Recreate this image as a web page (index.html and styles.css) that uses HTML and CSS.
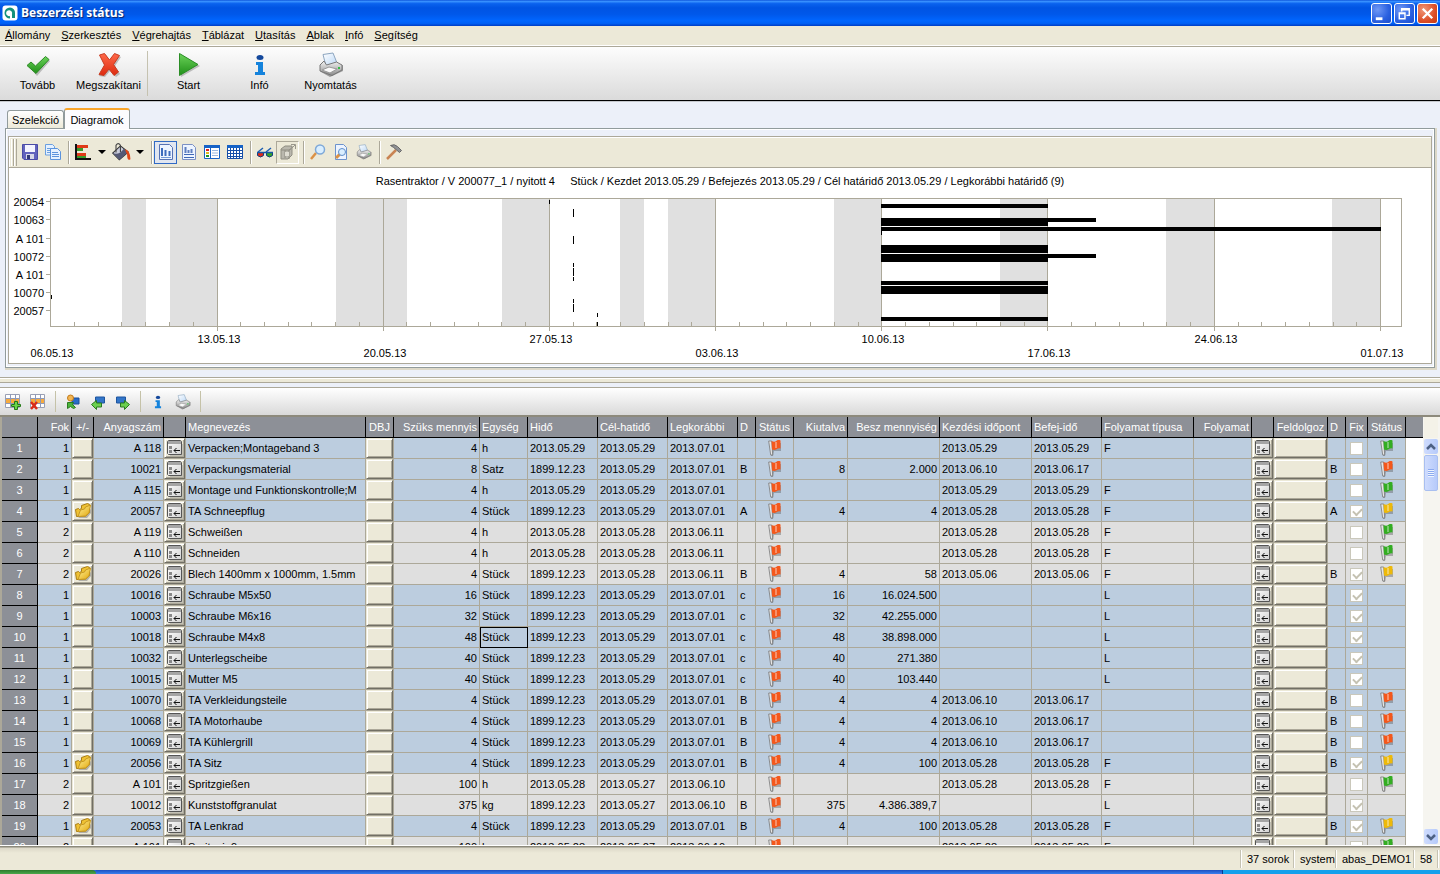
FILE: index.html
```html
<!DOCTYPE html>
<html lang="hu">
<head>
<meta charset="utf-8">
<title>Beszerzési státus</title>
<link rel="stylesheet" href="styles.css">
</head>
<body>
<svg class="sprite" aria-hidden="true">
  <defs>
    <linearGradient id="gGreen" x1="0" y1="0" x2="0" y2="1"><stop offset="0" stop-color="#6cd35a"/><stop offset="1" stop-color="#1f8f18"/></linearGradient>
    <linearGradient id="gRed" x1="0" y1="0" x2="0" y2="1"><stop offset="0" stop-color="#ff6a4a"/><stop offset="1" stop-color="#dd2a10"/></linearGradient>
    <linearGradient id="gGold" x1="0" y1="0" x2="1" y2="1"><stop offset="0" stop-color="#fff29a"/><stop offset="1" stop-color="#e2a70c"/></linearGradient>
    <linearGradient id="gGray" x1="0" y1="0" x2="0" y2="1"><stop offset="0" stop-color="#f4f4f4"/><stop offset="1" stop-color="#8b8b8b"/></linearGradient>
    <linearGradient id="gPaper" x1="0" y1="0" x2="1" y2="1"><stop offset="0" stop-color="#ffffff"/><stop offset="1" stop-color="#b9d6f5"/></linearGradient>
    <linearGradient id="gWindow" x1="0" y1="0" x2="1" y2="1"><stop offset="0" stop-color="#ffffff"/><stop offset="1" stop-color="#d2d2d2"/></linearGradient>
  </defs>
  <symbol id="i-check" viewBox="0 0 26 26"><path d="M4 15l3-4 4 4L22 6l3 3-13 15z" fill="#888" opacity=".5"/><path d="M2 13.500l4-3.500 4.500 4L20.500 4.500l3.500 3-13 14z" fill="url(#gGreen)" stroke="#2c8a24"/></symbol>
  <symbol id="i-cross" viewBox="0 0 26 26"><path d="M5 4l5-1 4 7 6-7 5 2-6 9 5 8-4 3-6-6-5 6-6-1 6-10z" fill="#888" opacity=".5"/><path d="M3.500 3l5-1.500 5 6.500 5-6.500 5 2-6 9 5 7.500-4.500 3.500-5-6.500-5 6.500-5-1 5.500-9.500z" fill="url(#gRed)" stroke="#c93c22"/></symbol>
  <symbol id="i-play" viewBox="0 0 26 26"><path d="M5 3l19 11L5 25z" fill="#888" opacity=".5"/><path d="M3.500 1.500L22 12.500l-18.500 11z" fill="url(#gGreen)" stroke="#2a8d25"/></symbol>
  <symbol id="i-info" viewBox="0 0 26 26"><ellipse cx="13" cy="5.500" rx="3.500" ry="2.500" fill="#14489c"/><path d="M9 10h7v10h2v3H8v-3h3v-7H9z" fill="#1583dc"/></symbol>
  <symbol id="i-printer" viewBox="0 0 26 26"><path d="M3 20l9 5 13-6v-6z" fill="#666" opacity=".6"/><path d="M5 2.500L15 1l4 10-11 3z" fill="url(#gPaper)" stroke="#8da6c0"/><path d="M2 13l4-4 2.500 4 10-3 5.500 3v5l-10 5.500L2 19z" fill="url(#gGray)" stroke="#777"/><path d="M4 18l7-3 8 2-7 4z" fill="#fafafa" stroke="#999"/><path d="M20 16h2" stroke="#3b4" stroke-width="2"/></symbol>
  <symbol id="i-save" viewBox="0 0 16 16"><path d="M.5.500h15v15H2l-1.500-1.500z" fill="#6263bd" stroke="#4a4ba6"/><path d="M3 1h10v7H3z" fill="#f4f4ff"/><path d="M4 10h8v5H4z" fill="#d8d8e8"/><path d="M5 11h3v4H5z" fill="#333a77"/></symbol>
  <symbol id="i-copy" viewBox="0 0 16 16"><path d="M.5.500h7l2 2V11h-9z" fill="#e5f1ff" stroke="#6a9fe0"/><path d="M2 4.500h5M2 6.500h5M2 8.500h5" stroke="#6a9fe0"/><path d="M5.500 4.500h7l3 3v8h-10z" fill="#e5f1ff" stroke="#5b93dd"/><path d="M7 8.500h6M7 10.500h7M7 12.500h7" stroke="#5b93dd"/></symbol>
  <symbol id="i-bars" viewBox="0 0 16 16"><path d="M2 1h11v3H2zM2 9h9v3H2z" fill="#e03a18"/><path d="M2 4h6v3H2zM2 12h9v2H2z" fill="#389b2a"/><path d="M1 0v15h15" stroke="#111" stroke-width="2" fill="none"/></symbol>
  <symbol id="i-bucket" viewBox="0 0 18 16"><path d="M1.500 9L8.500 2.500l7 5.500-8 7z" fill="#c9ccdc" stroke="#333"/><path d="M4.500 8.500V2q2-3 4 0v6" fill="none" stroke="#444"/><path d="M1.500 9q6 2 10-4l4 3-8 7z" fill="#555975"/><path d="M12.500 5.500q5 1 5 9-3 2-3-4z" fill="#e14718"/></symbol>
  <symbol id="i-chart1" viewBox="0 0 16 16"><path d="M1.500 .5h10l3 3v12h-13z" fill="#edf4ff" stroke="#5672b4"/><path d="M4 4v8M7.500 6v6M11.500 7v5" stroke="#3d6bbd" stroke-width="2"/><path d="M3 13.500h10" stroke="#749ad8"/></symbol>
  <symbol id="i-chart2" viewBox="0 0 16 16"><path d="M1.500 .5h10l3 3v12h-13z" fill="#edf4ff" stroke="#7b90c4"/><path d="M4.500 3v6M7.500 6v3M10.500 5v4" stroke="#5f7fc0" stroke-width="2"/><path d="M3 10.500h10M3 13.500h10" stroke="#3f67b5" stroke-width="1"/></symbol>
  <symbol id="i-legend" viewBox="0 0 16 16"><path d="M.5 1.500h15v13H.5z" fill="#fff" stroke="#1763c6"/><path d="M0 1h16v3H0z" fill="#1763c6"/><path d="M6.500 4v10" stroke="#1763c6"/><path d="M2 5h3v2H2z" fill="#d22"/><path d="M2 8h3v2H2z" fill="#db2"/><path d="M2 11h3v2H2z" fill="#292"/><path d="M8 6.500h6M8 9h6M8 11.500h6" stroke="#99b8df"/></symbol>
  <symbol id="i-table" viewBox="0 0 16 16"><path d="M.5 1.500h15v13H.5z" fill="#fff" stroke="#164fa8"/><path d="M0 1h16v3H0z" fill="#1763c6"/><path d="M3.500 4v10M6.500 4v10M9.500 4v10M12.500 4v10M1 6.500h14M1 9.500h14M1 12.500h14" stroke="#164fa8"/></symbol>
  <symbol id="i-glasses" viewBox="0 0 16 16"><path d="M1 8l5-4M9 8l5-4" stroke="#1f5fb0" stroke-width="1.500"/><path d="M.5 8.500h6v3q-3 3-6 0z" fill="#e02a18" stroke="#123f80"/><path d="M9.500 8.500h6v3q-3 3-6 0z" fill="#36a328" stroke="#123f80"/><path d="M0 8.500h16" stroke="#1758a5" stroke-width="1.500"/></symbol>
  <symbol id="i-cube" viewBox="0 0 16 16"><path d="M1 5l4-3h7v9l-4 4H1z" fill="#b9b7ad" stroke="#8f8d82"/><path d="M1 6h8v9M9 6l4-3M5 6v8" stroke="#8f8d82" fill="none"/><path d="M5 8h4v4H5z" fill="#dedcd2"/><path d="M9 7l6-6M11 .5h4.500V5" stroke="#99978c" fill="none"/></symbol>
  <symbol id="i-lens" viewBox="0 0 16 16"><path d="M1 15l5-6" stroke="#db9145" stroke-width="2.500"/><circle cx="10" cy="5.500" r="4.500" fill="#d9eeff" stroke="#7fa9d8" stroke-width="1.500"/></symbol>
  <symbol id="i-preview" viewBox="0 0 16 16"><path d="M2.500.500h8l3 3v12h-11z" fill="#edf4ff" stroke="#6c93cd"/><path d="M3 14l4-4" stroke="#db9145" stroke-width="3"/><circle cx="9" cy="8" r="3.500" fill="#d9eeff" stroke="#5d8ecb"/></symbol>
  <symbol id="i-hammer" viewBox="0 0 16 16"><path d="M1 15L10 6" stroke="#c98453" stroke-width="2.500"/><path d="M4.500 1.500q4-2 7 1l4 4-2 2-3.500-3q-2-2-5.500-4z" fill="#8f9194" stroke="#666"/></symbol>
  <symbol id="i-rowadd" viewBox="0 0 16 16"><path d="M.5.500h14v13H.5z" fill="#fff" stroke="#9aa0b4"/><path d="M1 5h13v4H1z" fill="#f7ab3e"/><path d="M5.500 0v13M10.500 0v13M1 4.500h13M1 9.500h13" stroke="#8f9ab8"/><path d="M9.500 7.500h3v3h3v2h-3v3h-3v-3h-3v-2h3z" fill="#6ad648" stroke="#257817"/></symbol>
  <symbol id="i-rowdel" viewBox="0 0 16 16"><path d="M.5.500h14v13H.5z" fill="#fff" stroke="#9aa0b4"/><path d="M1 5h13v4H1z" fill="#f7ab3e"/><path d="M5.500 0v13M10.500 0v13M1 4.500h13M1 9.500h13" stroke="#8f9ab8"/><path d="M1 8l6 7M7 8l-6 7" stroke="#da2c18" stroke-width="2.500"/></symbol>
  <symbol id="i-swap" viewBox="0 0 16 16"><path d="M7 4h7v6H7z" fill="#2a6cc8" stroke="#1d4f9b"/><circle cx="5.500" cy="4" r="3" fill="#f3b653" stroke="#c27b1c"/><path d="M2.500 8.500h6l-1 2 3 3-2 1-3-2-3 2z" fill="#4bb53b" stroke="#2a7b20"/></symbol>
  <symbol id="i-left" viewBox="0 0 16 16"><path d="M5.500 3h9v6h-9z" fill="#3275c8" stroke="#1d559f"/><path d="M1.500 10.500l5-4v2.500h5v4h-5v2.500z" fill="#6cd04f" stroke="#297b20"/></symbol>
  <symbol id="i-right" viewBox="0 0 16 16"><path d="M1.500 3h9v6h-9z" fill="#3275c8" stroke="#1d559f"/><path d="M14.500 10.500l-5-4v2.500h-4v4h4v2.500z" fill="#6cd04f" stroke="#297b20"/></symbol>
  <symbol id="i-folder" viewBox="0 0 16 16"><path d="M3 15h9l4-5V6z" fill="#777" opacity=".5"/><path d="M1.500 13.500L.5 6.500l3-1 1 1 2-1V2.500l6-2 2 1v8l-4 3.500z" fill="#efc233" stroke="#a87c14"/><path d="M3 13.500L5.500 7l4-1 1-2 5-2-1.500 8-3.500 3z" fill="url(#gGold)" stroke="#c69822"/></symbol>
  <symbol id="i-form" viewBox="0 0 16 16"><path d="M3 4h13v12H3z" fill="#777" opacity=".35"/><path d="M.5 13.500v-12l1-1h12l1 1v13H1.500z" fill="url(#gWindow)" stroke="#555"/><path d="M1 1h13v3H1z" fill="#a5a5a5"/><path d="M2 6h3v3H2zM2 10h3v3H2z" fill="#888"/><path d="M7 10.500h6M9.500 8L7 10.500 9.500 13" fill="none" stroke="#111"/></symbol>
  <symbol id="i-flag" viewBox="0 0 14 16"><path d="M5 3h8v8H6l-1 5H3z" fill="#555" opacity=".4"/><path d="M.7 1h3l1 14h-2z" fill="#e6e6e6" stroke="#777" stroke-width=".8"/><path d="M3.500 1q3 1.500 5-.2t4-.3v8q-2-.5-4 .7t-4.500.3z" fill="currentColor"/><path d="M8 2v6" stroke="#fff" opacity=".35" fill="none" stroke-width="2"/></symbol>
</svg>

<div class="app">
  <header class="titlebar">
    <svg class="logo" viewBox="0 0 16 16" aria-hidden="true"><rect x=".5" y=".5" width="15" height="15" rx="3" fill="#fff"/><path d="M8 2.500a5.500 5.500 0 1 0 0 11L8 11a3 3 0 1 1 2-2v4h3V8a5 5 0 0 0-5-5.500z" fill="#13917c"/></svg>
    <h1>Beszerzési státus</h1>
    <div class="winbtns">
      <button class="win" aria-label="Kis méret"><svg viewBox="0 0 20 20"><path d="M4 14h7v3H4z" fill="#fff"/></svg></button>
      <button class="win" aria-label="Előző méret"><svg viewBox="0 0 20 20"><path d="M7 8V5h8v7h-3M7 6h8M4.500 9.500h6v6h-6zM4 10h7" fill="none" stroke="#fff" stroke-width="1.500"/></svg></button>
      <button class="win close" aria-label="Bezárás"><svg viewBox="0 0 20 20"><path d="M5 5l10 10M15 5L5 15" stroke="#fff" stroke-width="2.400"/></svg></button>
    </div>
  </header>

  <nav class="menu">
    <a href="#"><u>Á</u>llomány</a><a href="#"><u>S</u>zerkesztés</a><a href="#"><u>V</u>égrehajtás</a><a href="#"><u>T</u>áblázat</a><a href="#"><u>U</u>tasítás</a><a href="#"><u>A</u>blak</a><a href="#"><u>I</u>nfó</a><a href="#"><u>S</u>egítség</a>
  </nav>

  <div class="maintools">
    <button><svg><use href="#i-check"/></svg>Tovább</button>
    <button><svg><use href="#i-cross"/></svg>Megszakítani</button>
    <i class="sep"></i>
    <button><svg><use href="#i-play"/></svg>Start</button>
    <button><svg><use href="#i-info"/></svg>Infó</button>
    <button><svg><use href="#i-printer"/></svg>Nyomtatás</button>
  </div>

  <section class="upper">
    <div class="tabs" role="tablist">
      <button class="tab" role="tab">Szelekció</button>
      <button class="tab active" role="tab" aria-selected="true">Diagramok</button>
    </div>
    <div class="tabpage">
      <div class="frame">
        <div class="charttools">
          <i class="grip"></i><i class="grip"></i>
          <button aria-label="Mentés"><svg><use href="#i-save"/></svg></button>
          <button aria-label="Másolás"><svg><use href="#i-copy"/></svg></button>
          <i class="sep"></i>
          <button aria-label="Diagramtípus"><svg><use href="#i-bars"/></svg></button>
          <button class="arrow" aria-label="Diagramtípusok"></button>
          <button aria-label="Kitöltés"><svg class="wide"><use href="#i-bucket"/></svg></button>
          <button class="arrow" aria-label="Színek"></button>
          <i class="sep"></i>
          <button class="on" aria-label="Függőleges rács"><svg><use href="#i-chart1"/></svg></button>
          <button aria-label="Vízszintes rács"><svg><use href="#i-chart2"/></svg></button>
          <button aria-label="Jelmagyarázat"><svg><use href="#i-legend"/></svg></button>
          <button aria-label="Adattábla"><svg><use href="#i-table"/></svg></button>
          <i class="sep"></i>
          <button aria-label="3D"><svg><use href="#i-glasses"/></svg></button>
          <button class="inset" aria-label="Forgatás"><svg><use href="#i-cube"/></svg></button>
          <i class="sep"></i>
          <button aria-label="Nagyítás"><svg><use href="#i-lens"/></svg></button>
          <button aria-label="Nyomtatási kép"><svg><use href="#i-preview"/></svg></button>
          <button aria-label="Diagram nyomtatása"><svg><use href="#i-printer"/></svg></button>
          <i class="sep"></i>
          <button aria-label="Beállítások"><svg><use href="#i-hammer"/></svg></button>
        </div>
        <svg class="chart" id="chart" viewBox="9 168 1422 195" role="img" aria-label="Gantt-diagram"></svg>
      </div>
    </div>
  </section>

  <div class="splitter"></div>

  <div class="gridtools">
    <button aria-label="Sor beszúrása"><svg><use href="#i-rowadd"/></svg></button>
    <button aria-label="Sor törlése"><svg><use href="#i-rowdel"/></svg></button>
    <i class="sep"></i>
    <button aria-label="Csere"><svg><use href="#i-swap"/></svg></button>
    <button aria-label="Előző"><svg><use href="#i-left"/></svg></button>
    <button aria-label="Következő"><svg><use href="#i-right"/></svg></button>
    <i class="sep"></i>
    <button aria-label="Sor infó"><svg><use href="#i-info"/></svg></button>
    <button aria-label="Táblázat nyomtatása"><svg><use href="#i-printer"/></svg></button>
    <i class="sep"></i>
  </div>

  <main class="gridarea">
    <div class="gridbody">
      <table class="grid">
        <colgroup>
          <col class="c36"><col class="c34"><col class="c22"><col class="c70"><col class="c22"><col class="c180"><col class="c28"><col class="c86"><col class="c48"><col class="c70"><col class="c70"><col class="c70"><col class="c18"><col class="c38"><col class="c54"><col class="c92"><col class="c92"><col class="c70"><col class="c92"><col class="c58"><col class="c22"><col class="c54"><col class="c18"><col class="c22"><col class="c38"><col class="c17">
        </colgroup>
        <thead><tr>
          <th></th><th class="r">Fok</th><th class="c">+/-</th><th class="r">Anyagszám</th><th></th><th>Megnevezés</th><th class="c">DBJ</th><th class="r">Szüks mennyis</th><th>Egység</th><th>Hidő</th><th>Cél-hatidő</th><th>Legkorábbi</th><th>D</th><th class="c">Státus</th><th class="r">Kiutalva</th><th class="r">Besz mennyiség</th><th>Kezdési időpont</th><th>Befej-idő</th><th>Folyamat típusa</th><th class="r">Folyamat</th><th></th><th class="c">Feldolgoz</th><th>D</th><th class="c">Fix</th><th class="c">Státus</th><th class="last"></th>
        </tr></thead>
        <tbody id="rows"></tbody>
      </table>
    </div>
    <div class="scroll">
      <i class="corner"></i>
      <button class="sb" aria-label="Fel"><svg viewBox="0 0 10 10"><path d="M1 7l4-4 4 4" fill="none" stroke="#4d6185" stroke-width="2.500"/></svg></button>
      <i class="thumb"></i>
      <i class="track"></i>
      <button class="sb" aria-label="Le"><svg viewBox="0 0 10 10"><path d="M1 3l4 4 4-4" fill="none" stroke="#4d6185" stroke-width="2.500"/></svg></button>
    </div>
  </main>

  <footer class="status">
    <span class="s52">37 sorok</span><span class="s42">system</span><span class="s78">abas_DEMO1</span><span class="s24">58</span><span class="s2"></span>
  </footer>
  <div class="taskbar"><i class="start"></i><i class="mid"></i><i class="tray"></i></div>
</div>
<script src="app.js"></script>
</body>
</html>
```

FILE: styles.css
```css
* { box-sizing: border-box; }
body { margin: 0; font: 11px/14px "Liberation Sans", Arial, sans-serif; color: #000; }
button { font: inherit; color: inherit; border: 0; padding: 0; margin: 0; background: none; }
.sprite { position: absolute; width: 0; height: 0; }
.app { display: flex; flex-direction: column; height: 100vh; background: #ecf0f9; overflow: hidden; }

.titlebar { display: flex; align-items: center; gap: 3px; flex: 0 0 26px; padding: 0 2px 0 2px; background: linear-gradient(#0a50d8 0, #3a93ff 5%, #0a62ee 14%, #0054e3 30%, #0058ea 55%, #0066ff 80%, #0060f5 90%, #003dc4 100%); }
.titlebar h1 { flex: 1; margin: 0; font: bold 12px/16px "Open Sans", "Liberation Sans", sans-serif; color: #fff; text-shadow: 1px 1px 1px #0a246a; }
.logo { width: 16px; height: 16px; }
.winbtns { display: flex; gap: 2px; }
.win { width: 21px; height: 21px; border: 1px solid #fff; border-radius: 3px; background: radial-gradient(circle at 30% 30%, #6f98f5, #2a60e0 60%, #1c4dcb); }
.win svg { display: block; width: 19px; height: 19px; }
.win.close { background: radial-gradient(circle at 30% 30%, #f09878, #dd4f28 60%, #c63a12); }

.menu { display: flex; gap: 11px; flex: 0 0 21px; padding: 2px 5px 0; background: #ece9d8; border-bottom: 1px solid #aca899; box-shadow: inset 0 -1px #fff; }
.menu a { color: #000; text-decoration: none; }

.maintools { display: flex; flex: 0 0 55px; padding: 4px 2px 0; background: linear-gradient(#fdfdfd, #dadada); border-bottom: 1px solid #c5c8cd; box-shadow: inset 0 -1px #000; }
.maintools button { display: flex; flex-direction: column; align-items: center; width: 71px; height: 46px; white-space: nowrap; }
.maintools svg { width: 26px; height: 26px; margin-top: 1px; }
.maintools .sep { width: 1px; height: 45px; margin: 0 5px 0 3px; background: #c5c2b0; }

.upper { padding: 6px 5px 9px 5px; }
.tabs { display: flex; align-items: flex-end; height: 20px; padding-left: 2px; }
.tab { height: 18px; width: 57px; border: 1px solid #919b9c; border-bottom: 0; border-radius: 3px 3px 0 0; background: linear-gradient(#fff, #ece9d8); }
.tab.active { height: 21px; width: 66px; margin-bottom: -1px; border-top: 2px solid #f9a52b; background: #fcfcfe; z-index: 1; }
.tabpage { padding: 7px 2px 3px; border: 1px solid #919b9c; box-shadow: inset 0 0 0 1px #fff, 1px 1px 0 1px #dcd8c8; }
.frame { border: 1px solid #aca899; background: #fff; }
.charttools { display: flex; align-items: center; height: 31px; padding-left: 2px; background: #ece9d8; border-bottom: 1px solid #aca899; box-shadow: inset 1px 1px #fff; }
.charttools button { display: flex; align-items: center; justify-content: center; width: 23px; height: 23px; }
.charttools svg { width: 16px; height: 16px; }
.charttools .wide { width: 20px; height: 18px; }
.charttools .sep { width: 2px; height: 23px; margin: 0 1px 0 4px; background: #aca899; border-right: 1px solid #fff; }
.charttools .grip { width: 3px; height: 27px; border-left: 1px solid #fff; border-right: 1px solid #aca899; }
.charttools .grip + .grip { margin-right: 1px; }
.charttools .arrow { width: 15px; }
.charttools .arrow::before { content: ""; border: 4px solid transparent; border-top-color: #000; border-bottom: 0; }
.charttools .on { border: 1px solid #316ac5; background: #e1e6f0; }
.charttools .inset { border: 1px solid #fff; border-top-color: #aca899; border-left-color: #aca899; }
.chart { display: block; width: 100%; height: auto; font-size: 11px; }
.chart text { white-space: pre; }
.axis { stroke: #aca899; fill: none; shape-rendering: crispEdges; }
.band { fill: #e0e0e0; }
.bar { shape-rendering: crispEdges; }

.splitter { flex: 0 0 10px; border-top: 1px solid #aca899; background: linear-gradient(#fff 0 1px, #ece9d8 1px 4px, #aca899 4px 5px, #ecf0f9 5px); }
.gridtools { display: flex; align-items: center; flex: 0 0 30px; background: linear-gradient(#fff, #d9d9d9); border-top: 1px solid #aca899; border-bottom: 2px solid #8d8a7c; }
.gridtools button { display: flex; align-items: center; justify-content: center; width: 25px; height: 24px; }
.gridtools svg { width: 16px; height: 16px; }
.gridtools .sep { width: 1px; height: 21px; margin: 0 4px 0 5px; background: #c5c2a8; }

.gridarea { display: flex; flex: 1; min-height: 0; background: #fff; border-left: 2px solid #aca899; }
.gridbody { flex: 1; min-width: 0; overflow: hidden; }
.grid { table-layout: fixed; width: 1421px; border-collapse: separate; border-spacing: 0; }
.c17 { width: 17px; } .c18 { width: 18px; } .c22 { width: 22px; } .c28 { width: 28px; } .c34 { width: 34px; } .c36 { width: 36px; } .c38 { width: 38px; }
.c48 { width: 48px; } .c54 { width: 54px; } .c58 { width: 58px; } .c70 { width: 70px; } .c86 { width: 86px; } .c92 { width: 92px; } .c180 { width: 180px; }
.grid th, .grid td { height: 21px; padding: 0 2px; overflow: hidden; white-space: nowrap; text-align: left; font-weight: normal; }
.grid th { background: #8d9097; color: #fff; border-right: 1px solid #000; border-bottom: 1px solid #000; }
.grid thead .c { text-align: center; padding: 0; }
.grid th.last { border-right: 0; }
.grid tbody th { text-align: center; }
.grid td { background: #bccddf; border-right: 1px solid #aca899; border-bottom: 1px solid #aca899; }
.grid tr.alt td { background: #dfdfdf; }
.grid td.none, .grid tr.alt td.none { background: #fff; border: 0; }
.grid .r, .grid thead .r { text-align: right; }
.grid td.m { padding: 0; text-align: center; }
.grid td.cur { outline: 1px solid #000; outline-offset: -1px; }
.grid td svg { display: block; width: 16px; height: 16px; margin: 0 auto; flex: none; }
.grid td.b { padding: 0; background: #ece9d8; }
.cell { display: flex; align-items: center; justify-content: center; width: 100%; height: 20px; background: #ece9d8; border: 1px solid #ece9d8; border-right-color: #716f64; border-bottom-color: #716f64; box-shadow: inset 1px 1px #fff, inset -1px -1px #aca899; }
.red { color: #f4571b; } .green { color: #33ad22; } .gold { color: #edb90a; }
.fix { appearance: none; display: block; width: 13px; height: 13px; margin: 0 auto; background: #fff; border: 1px solid #cac8bb; }
.fix:checked::before { content: ""; display: block; width: 7px; height: 4px; margin: 2px; border-left: 2px solid #c5c2b2; border-bottom: 2px solid #c5c2b2; transform: rotate(-45deg); }

.scroll { display: flex; flex-direction: column; width: 17px; padding: 0 2px 0 1px; background: #f6f5f0; }
.corner { height: 21px; background: #f4f2e8; }
.sb { height: 15px; border-radius: 2px; background: linear-gradient(90deg, #cfdcfe, #b6cafa); margin: 1px 0; display: flex; align-items: center; justify-content: center; }
.sb svg { width: 10px; height: 10px; }
.thumb { height: 36px; border: 1px solid #a9bff0; border-radius: 2px; background: repeating-linear-gradient(#8caaf0 0 1px, #eef4fe 1px 2px) center / 6px 8px no-repeat, linear-gradient(90deg, #cfdcfe, #b6cafa); }
.track { flex: 1; }

.status { display: flex; justify-content: flex-end; flex: 0 0 25px; padding: 5px 0 2px; background: linear-gradient(#fff 0 1px, #8d8a7c 1px 2px, #dcd8c8 3px, #ece9d8 8px); }
.status span { padding: 2px 0 0 5px; border-left: 1px solid #fff; box-shadow: -1px 0 #c5c2b2; white-space: nowrap; }
.s52 { width: 53px; } .s42 { width: 42px; } .s78 { width: 78px; } .s24 { width: 24px; } .status .s2 { width: 2px; padding: 0; }
.taskbar { display: flex; flex: 0 0 4px; background: #245edb; }
.start { width: 96px; background: linear-gradient(#2d7a2d, #4ba84b); border-radius: 0 4px 0 0; }
.mid { flex: 1; background: linear-gradient(#1c4fc0, #3a80ee); }
.tray { width: 218px; background: #15a0ec; border-left: 1px solid #0a3a90; }
```

FILE: app.js
```js
// n | fok | folder | item | name | qty | unit | date | target | earliest | D | allocated | purchase qty | start | end | type | D | fix | flag
const data = `1|1||A 118|Verpacken;Montageband 3|4|h|2013.05.29|2013.05.29|2013.07.01||||2013.05.29|2013.05.29|F||0|green
2|1||10021|Verpackungsmaterial|8|Satz|1899.12.23|2013.05.29|2013.07.01|B|8|2.000|2013.06.10|2013.06.17||B|0|red
3|1||A 115|Montage und Funktionskontrolle;M|4|h|2013.05.29|2013.05.29|2013.07.01||||2013.05.29|2013.05.29|F||0|green
4|1|f|20057|TA Schneepflug|4|Stück|1899.12.23|2013.05.29|2013.07.01|A|4|4|2013.05.28|2013.05.28|F|A|1|gold
5|2||A 119|Schweißen|4|h|2013.05.28|2013.05.28|2013.06.11||||2013.05.28|2013.05.28|F||0|green
6|2||A 110|Schneiden|4|h|2013.05.28|2013.05.28|2013.06.11||||2013.05.28|2013.05.28|F||0|green
7|2|f|20026|Blech 1400mm x 1000mm, 1.5mm|4|Stück|1899.12.23|2013.05.28|2013.06.11|B|4|58|2013.05.06|2013.05.06|F|B|1|gold
8|1||10016|Schraube M5x50|16|Stück|1899.12.23|2013.05.29|2013.07.01|c|16|16.024.500|||L||1|
9|1||10003|Schraube M6x16|32|Stück|1899.12.23|2013.05.29|2013.07.01|c|32|42.255.000|||L||1|
10|1||10018|Schraube M4x8|48|Stück|1899.12.23|2013.05.29|2013.07.01|c|48|38.898.000|||L||1|
11|1||10032|Unterlegscheibe|40|Stück|1899.12.23|2013.05.29|2013.07.01|c|40|271.380|||L||1|
12|1||10015|Mutter M5|40|Stück|1899.12.23|2013.05.29|2013.07.01|c|40|103.440|||L||1|
13|1||10070|TA Verkleidungsteile|4|Stück|1899.12.23|2013.05.29|2013.07.01|B|4|4|2013.06.10|2013.06.17||B|0|red
14|1||10068|TA Motorhaube|4|Stück|1899.12.23|2013.05.29|2013.07.01|B|4|4|2013.06.10|2013.06.17||B|0|red
15|1||10069|TA Kühlergrill|4|Stück|1899.12.23|2013.05.29|2013.07.01|B|4|4|2013.06.10|2013.06.17||B|0|red
16|1|f|20056|TA Sitz|4|Stück|1899.12.23|2013.05.29|2013.07.01|B|4|100|2013.05.28|2013.05.28|F|B|1|gold
17|2||A 101|Spritzgießen|100|h|2013.05.28|2013.05.27|2013.06.10||||2013.05.28|2013.05.28|F||0|green
18|2||10012|Kunststoffgranulat|375|kg|1899.12.23|2013.05.27|2013.06.10|B|375|4.386.389,7|||L||1|
19|1|f|20053|TA Lenkrad|4|Stück|1899.12.23|2013.05.29|2013.07.01|B|4|100|2013.05.28|2013.05.28|F|B|1|gold
20|2||A 101|Spritzgießen|100|h|2013.05.28|2013.05.27|2013.06.10||||2013.05.28|2013.05.28|F||0|green`;

const icon = (id, cls = '') => `<svg class="${cls}" aria-hidden="true"><use href="#i-${id}"/></svg>`;
const td = (v, cls = '') => `<td class="${cls}">${v}</td>`;
const btn = (label, inner = '') => `<td class="b"><button class="cell" aria-label="${label}">${inner}</button></td>`;

document.getElementById('rows').innerHTML = data.split('\n').map(line => {
  const [n, fok, fold, item, name, qty, unit, d1, d2, d3, dd, alloc, buy, start, end, type, dd2, fix, flag] = line.split('|');
  return `<tr class="${fok === '2' ? 'alt' : ''}"><th>${n}</th>` +
    td(fok, 'r') + btn('Kibontás', fold && icon('folder')) + td(item, 'r') + btn('Részletek', icon('form')) +
    td(name) + btn('DBJ') + td(qty, 'r') + td(unit, n === '10' ? 'cur' : '') + td(d1) + td(d2) + td(d3) + td(dd) +
    td(icon('flag', 'red'), 'm') + td(alloc, 'r') + td(buy, 'r') + td(start) + td(end) + td(type) + td('') +
    btn('Folyamat', icon('form')) + btn('Feldolgoz') + td(dd2) +
    td(`<input type="checkbox" class="fix" aria-label="Fix" disabled ${fix === '1' ? 'checked' : ''}>`, 'm') +
    td(flag && icon('flag', flag), 'm') + '<td class="none"></td></tr>';
}).join('');

// Gantt chart
const rect = (x, y, w, h, cls) => `<rect class="${cls}" x="${x}" y="${y}" width="${w}" height="${h}"/>`;
const path = d => `<path class="axis" d="${d}"/>`;
const text = (x, y, t, anchor) => `<text x="${x}" y="${y}" text-anchor="${anchor}">${t}</text>`;
let s = '';
[[122, 24], [170, 47], [336, 71], [502, 47], [620, 24], [668, 47], [834, 47], [1000, 47], [1166, 48], [1332, 48]]
  .forEach(([x, w]) => { s += rect(x, 199, w, 127, 'band'); });
s += path('M50.5 198.5H1401.5V326.5H50.5Z');
for (let d = 1; d < 56; d++) {
  const x = Math.round(50 + d * 23.75) + 0.5;
  if (d % 7) s += path(`M${x} 322V326`);
}
['06.05.13', '13.05.13', '20.05.13', '27.05.13', '03.06.13', '10.06.13', '17.06.13', '24.06.13', '01.07.13'].forEach((t, i) => {
  const x = [50, 217, 383, 549, 715, 881, 1047, 1214, 1380][i];
  if (i) s += path(`M${x + 0.5} 199V331`);
  s += text(x + 2, i % 2 ? 343 : 357, t, 'middle');
});
['20054', '10063', 'A 101', '10072', 'A 101', '10070', '20057'].forEach((t, i) => {
  const y = [201, 219, 238, 256, 274, 292, 310][i];
  s += path(`M46 ${y + 0.5}H50`) + text(44, y + 5, t, 'end');
});
[[881, 204, 167, 4], [881, 218, 167, 8], [881, 218, 215, 4], [881, 227, 500, 4], [881, 245, 167, 8], [881, 254, 167, 8],
 [881, 254, 215, 4], [881, 281, 167, 4], [881, 286, 167, 8], [881, 317, 167, 4], [549, 200, 1, 4], [573, 209, 1, 8],
 [573, 236, 1, 8], [573, 263, 1, 4], [573, 268, 1, 8], [573, 277, 1, 4], [573, 299, 1, 4], [573, 304, 1, 8],
 [597, 313, 1, 4], [597, 322, 1, 4], [881, 231, 1, 4], [51, 295, 1, 4]].forEach(b => { s += rect(...b, 'bar'); });
s += text(720, 185, 'Rasentraktor / V 200077_1 / nyitott 4     Stück / Kezdet 2013.05.29 / Befejezés 2013.05.29 / Cél határidő 2013.05.29 / Legkorábbi határidő (9)', 'middle');
document.getElementById('chart').innerHTML = s;
```
